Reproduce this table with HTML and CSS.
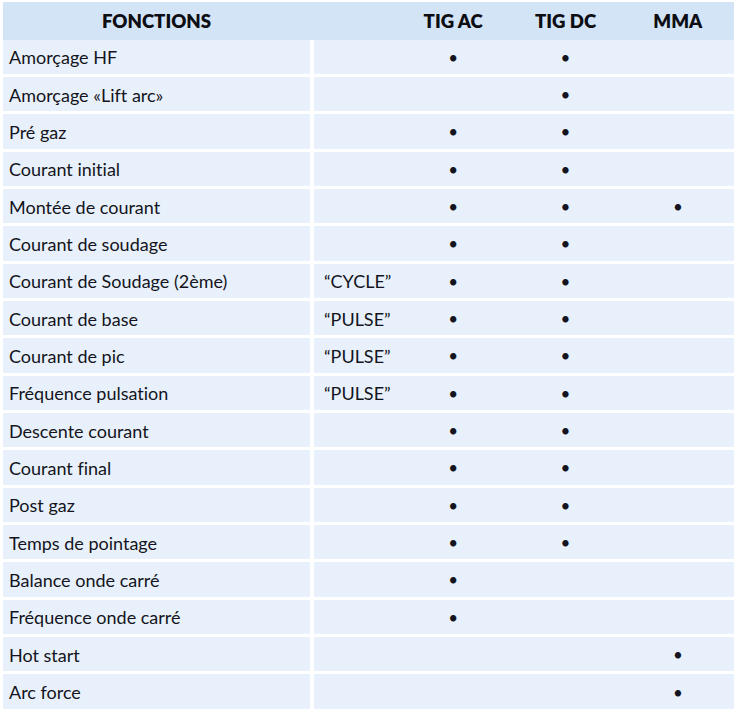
FILE: index.html
```html
<!DOCTYPE html>
<html lang="fr">
<head>
<meta charset="utf-8">
<title>Fonctions</title>
<link rel="stylesheet" href="styles.css">
</head>
<body>
<div class="table">
  <div class="head">
    <div class="h-fn">FONCTIONS</div>
    <div class="h-rest">
      <div></div>
      <div class="h-col">TIG AC</div>
      <div class="h-col">TIG DC</div>
      <div class="h-col">MMA</div>
    </div>
  </div>
  <div class="body">
    <div class="row"><div class="fn">Amorçage HF</div><div class="rest"><div class="mode"></div><div class="c">•</div><div class="c">•</div><div class="c"></div></div></div>
    <div class="row"><div class="fn">Amorçage «Lift arc»</div><div class="rest"><div class="mode"></div><div class="c"></div><div class="c">•</div><div class="c"></div></div></div>
    <div class="row"><div class="fn">Pré gaz</div><div class="rest"><div class="mode"></div><div class="c">•</div><div class="c">•</div><div class="c"></div></div></div>
    <div class="row"><div class="fn">Courant initial</div><div class="rest"><div class="mode"></div><div class="c">•</div><div class="c">•</div><div class="c"></div></div></div>
    <div class="row"><div class="fn">Montée de courant</div><div class="rest"><div class="mode"></div><div class="c">•</div><div class="c">•</div><div class="c">•</div></div></div>
    <div class="row"><div class="fn">Courant de soudage</div><div class="rest"><div class="mode"></div><div class="c">•</div><div class="c">•</div><div class="c"></div></div></div>
    <div class="row"><div class="fn">Courant de Soudage (2ème)</div><div class="rest"><div class="mode">“CYCLE”</div><div class="c">•</div><div class="c">•</div><div class="c"></div></div></div>
    <div class="row"><div class="fn">Courant de base</div><div class="rest"><div class="mode">“PULSE”</div><div class="c">•</div><div class="c">•</div><div class="c"></div></div></div>
    <div class="row"><div class="fn">Courant de pic</div><div class="rest"><div class="mode">“PULSE”</div><div class="c">•</div><div class="c">•</div><div class="c"></div></div></div>
    <div class="row"><div class="fn">Fréquence pulsation</div><div class="rest"><div class="mode">“PULSE”</div><div class="c">•</div><div class="c">•</div><div class="c"></div></div></div>
    <div class="row"><div class="fn">Descente courant</div><div class="rest"><div class="mode"></div><div class="c">•</div><div class="c">•</div><div class="c"></div></div></div>
    <div class="row"><div class="fn">Courant final</div><div class="rest"><div class="mode"></div><div class="c">•</div><div class="c">•</div><div class="c"></div></div></div>
    <div class="row"><div class="fn">Post gaz</div><div class="rest"><div class="mode"></div><div class="c">•</div><div class="c">•</div><div class="c"></div></div></div>
    <div class="row"><div class="fn">Temps de pointage</div><div class="rest"><div class="mode"></div><div class="c">•</div><div class="c">•</div><div class="c"></div></div></div>
    <div class="row"><div class="fn">Balance onde carré</div><div class="rest"><div class="mode"></div><div class="c">•</div><div class="c"></div><div class="c"></div></div></div>
    <div class="row"><div class="fn">Fréquence onde carré</div><div class="rest"><div class="mode"></div><div class="c">•</div><div class="c"></div><div class="c"></div></div></div>
    <div class="row"><div class="fn">Hot start</div><div class="rest"><div class="mode"></div><div class="c"></div><div class="c"></div><div class="c">•</div></div></div>
    <div class="row"><div class="fn">Arc force</div><div class="rest"><div class="mode"></div><div class="c"></div><div class="c"></div><div class="c">•</div></div></div>
  </div>
</div>
</body>
</html>
```
FILE: styles.css
```css
html, body {
  margin: 0;
  padding: 0;
  background: #ffffff;
}
body {
  padding: 2px 0 0 3px;
  font-family: "Lato", "Liberation Sans", sans-serif;
  font-variant-ligatures: none;
  color: #141420;
}
.table {
  width: 731px;
}
.head {
  display: grid;
  grid-template-columns: 307px 424px;
  height: 37.5px;
  background: #d3e4f6;
  align-items: center;
  font-weight: 800;
  font-size: 18.6px;
  color: #0d0d14;
}
.h-fn {
  text-align: center;
}
.h-rest {
  display: grid;
  grid-template-columns: 87px repeat(3, 1fr);
}
.h-col {
  text-align: center;
}
.body {
  display: flex;
  flex-direction: column;
  gap: 3px;
}
.row {
  display: grid;
  grid-template-columns: 307px 420px;
  column-gap: 4px;
  height: 34.35px;
  font-size: 18px;
}
.fn, .rest {
  background: #e8f1fb;
}
.fn {
  display: flex;
  align-items: center;
  padding: 1px 0 0 6px;
}
.rest {
  display: grid;
  grid-template-columns: 83px repeat(3, 1fr);
  align-items: center;
  padding-top: 1px;
}
.mode {
  padding-left: 10px;
}
.c {
  text-align: center;
  font-size: 17px;
}
```
